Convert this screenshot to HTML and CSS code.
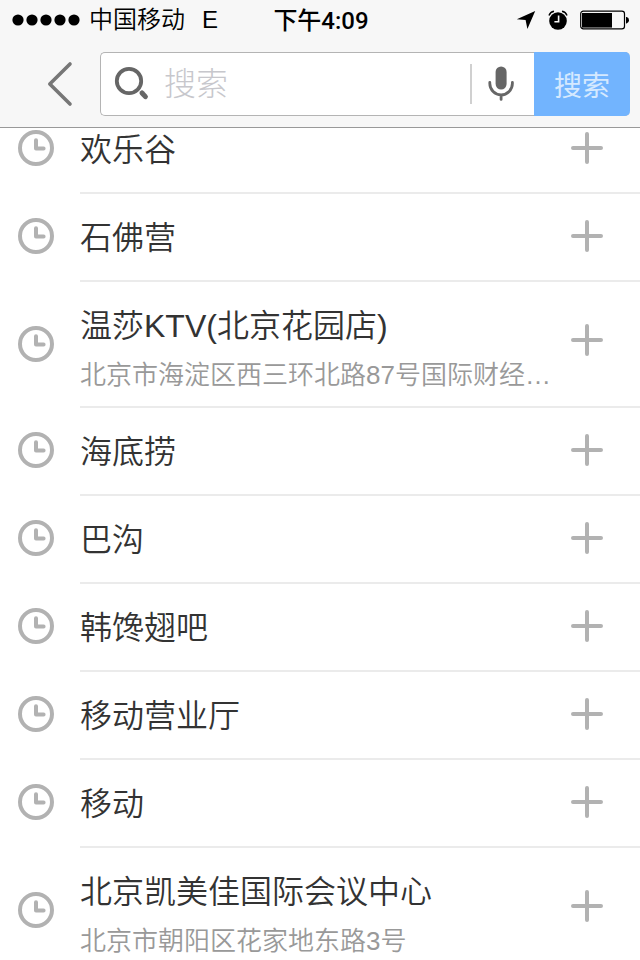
FILE: index.html
```html
<!DOCTYPE html>
<html lang="zh-CN">
<head>
  <meta charset="UTF-8">
  <meta name="viewport" content="width=device-width, initial-scale=1.0">
  <title>搜索</title>
  <link rel="stylesheet" href="styles.css">
</head>
<body>
<!-- shared icons -->
<svg class="sprite" aria-hidden="true">
  <symbol id="clock" viewBox="0 0 36 36">
    <circle cx="18" cy="18" r="16" fill="none" stroke="currentColor" stroke-width="4"/>
    <path d="M18 10.3V18.4H25.6" fill="none" stroke="currentColor" stroke-width="4" stroke-linecap="round" stroke-linejoin="round"/>
  </symbol>
  <symbol id="plus" viewBox="0 0 32 32">
    <path d="M16 2V30M2 16H30" fill="none" stroke="currentColor" stroke-width="4" stroke-linecap="round"/>
  </symbol>
</svg>

<header>
  <div class="status-bar">
    <div class="carrier">
      <svg class="signal" width="68" height="12" viewBox="0 0 68 12">
        <circle cx="6" cy="6" r="5.6"/>
        <circle cx="20" cy="6" r="5.6"/>
        <circle cx="34" cy="6" r="5.6"/>
        <circle cx="48" cy="6" r="5.6"/>
        <circle cx="62" cy="6" r="5.6"/>
      </svg>
      <span>中国移动</span>
      <span class="network">E</span>
    </div>
    <time class="time">下午4:09</time>
    <div class="indicators">
      <svg width="20" height="20" viewBox="0 0 20 20">
        <path d="M19.2 1L0.8 9.2L9.6 10L11.4 19Z"/>
      </svg>
      <svg width="20" height="20" viewBox="0 0 20 20">
        <circle cx="10" cy="11" r="8.8"/>
        <path d="M1 5.4Q2.2 2 6 1.2M19 5.4Q17.8 2 14 1.2" fill="none" stroke="#000" stroke-width="1.4"/>
        <path d="M10.6 5.6V11.8H6.4" fill="none" stroke="#f7f7f7" stroke-width="1.6"/>
      </svg>
      <svg width="50" height="20" viewBox="0 0 50 20">
        <rect x="0.7" y="1.2" width="43.8" height="17.6" rx="2.6" fill="none" stroke="#000" stroke-width="1.2"/>
        <rect x="2" y="3" width="30" height="14.6"/>
        <path d="M46 7H46.6Q49 7.4 49 10.2T46.6 13.4H46Z"/>
      </svg>
    </div>
  </div>

  <div class="nav-bar">
    <button class="back" type="button" aria-label="返回">
      <svg width="26" height="46" viewBox="0 0 26 46">
        <path d="M23 3L2.8 23L23 43" fill="none" stroke="#777" stroke-width="3.6" stroke-linecap="round" stroke-linejoin="round"/>
      </svg>
    </button>
    <form class="search">
      <label class="search-icon" for="keyword" aria-label="搜索">
        <svg width="36" height="36" viewBox="0 0 36 36">
          <circle cx="15" cy="15" r="12.2" fill="none" stroke="#666" stroke-width="3.8"/>
          <path d="M28 27L31.4 30.6" stroke="#666" stroke-width="5" stroke-linecap="round"/>
        </svg>
      </label>
      <input id="keyword" type="text" placeholder="搜索">
      <button class="voice" type="button" aria-label="语音">
        <svg width="26" height="36" viewBox="0 0 26 36">
          <rect x="7.6" y="0.5" width="11" height="23" rx="5.5" fill="#666"/>
          <path d="M1.8 16.4V17.6A11.3 11.3 0 0 0 24.4 17.6V16.4M13.1 29V33.4" fill="none" stroke="#666" stroke-width="2.8" stroke-linecap="round"/>
        </svg>
      </button>
      <button class="submit" type="submit">搜索</button>
    </form>
  </div>
</header>

<ul class="history">
  <li>
    <svg class="clock"><use href="#clock"/></svg>
    <div class="place"><h2>欢乐谷</h2></div>
    <button class="add" type="button" aria-label="添加"><svg><use href="#plus"/></svg></button>
  </li>
  <li>
    <svg class="clock"><use href="#clock"/></svg>
    <div class="place"><h2>石佛营</h2></div>
    <button class="add" type="button" aria-label="添加"><svg><use href="#plus"/></svg></button>
  </li>
  <li class="detailed">
    <svg class="clock"><use href="#clock"/></svg>
    <div class="place">
      <h2>温莎KTV(北京花园店)</h2>
      <p>北京市海淀区西三环北路87号国际财经…</p>
    </div>
    <button class="add" type="button" aria-label="添加"><svg><use href="#plus"/></svg></button>
  </li>
  <li>
    <svg class="clock"><use href="#clock"/></svg>
    <div class="place"><h2>海底捞</h2></div>
    <button class="add" type="button" aria-label="添加"><svg><use href="#plus"/></svg></button>
  </li>
  <li>
    <svg class="clock"><use href="#clock"/></svg>
    <div class="place"><h2>巴沟</h2></div>
    <button class="add" type="button" aria-label="添加"><svg><use href="#plus"/></svg></button>
  </li>
  <li>
    <svg class="clock"><use href="#clock"/></svg>
    <div class="place"><h2>韩馋翅吧</h2></div>
    <button class="add" type="button" aria-label="添加"><svg><use href="#plus"/></svg></button>
  </li>
  <li>
    <svg class="clock"><use href="#clock"/></svg>
    <div class="place"><h2>移动营业厅</h2></div>
    <button class="add" type="button" aria-label="添加"><svg><use href="#plus"/></svg></button>
  </li>
  <li>
    <svg class="clock"><use href="#clock"/></svg>
    <div class="place"><h2>移动</h2></div>
    <button class="add" type="button" aria-label="添加"><svg><use href="#plus"/></svg></button>
  </li>
  <li class="detailed">
    <svg class="clock"><use href="#clock"/></svg>
    <div class="place">
      <h2>北京凯美佳国际会议中心</h2>
      <p>北京市朝阳区花家地东路3号</p>
    </div>
    <button class="add" type="button" aria-label="添加"><svg><use href="#plus"/></svg></button>
  </li>
</ul>
</body>
</html>
```
FILE: styles.css
```css
* {
    box-sizing: border-box;
}

body {
    display: flex;
    flex-direction: column;
    height: 100vh;
    margin: 0;
    overflow: hidden;
    font-family: "Liberation Sans", "Noto Sans CJK SC", sans-serif;
    font-weight: 350;
    background-color: #fff;
    color: #333;
}

svg {
    display: block;
    flex: none;
}

button {
    display: flex;
    align-items: center;
    justify-content: center;
    padding: 0;
    border: 0;
    background: none;
    font: inherit;
    cursor: pointer;
}

.sprite {
    position: absolute;
    width: 0;
    height: 0;
}

header {
    flex: none;
    z-index: 1;
    background-color: #f7f7f7;
    border-bottom: 1px solid #999;
}

/* status bar */
.status-bar {
    display: grid;
    grid-template-columns: 1fr auto 1fr;
    align-items: center;
    height: 40px;
    padding: 0 10px 0 12px;
    font-size: 24px;
    line-height: 42px;
    color: #000;
}

.carrier {
    display: flex;
    align-items: center;
    gap: 9px;
    height: 40px;
}

.network {
    margin-left: 8px;
}

.time {
    height: 40px;
    font-family: Roboto, "Noto Sans CJK SC", sans-serif;
    font-weight: 500;
}

.indicators {
    display: flex;
    justify-content: flex-end;
    gap: 12px;
}

/* search bar */
.nav-bar {
    display: flex;
    padding: 12px 10px 11px 0;
}

.back {
    width: 100px;
    padding-left: 20px;
}

.search {
    display: flex;
    flex: 1;
    min-width: 0;
    height: 64px;
    border: 1px solid #b4b4b4;
    border-right: 0;
    border-radius: 5px;
    background-color: #fff;
}

.search-icon {
    display: flex;
    align-items: center;
    padding: 0 14px 0 13px;
}

.search input {
    flex: 1;
    min-width: 0;
    padding: 0;
    border: 0;
    outline: 0;
    background: none;
    font: inherit;
    font-size: 32px;
    color: #333;
}

.search input::placeholder {
    font-weight: 300;
    color: #c7c7cc;
    opacity: 1;
}

.voice {
    width: 64px;
    height: 40px;
    margin: 11px 0;
    padding-right: 4px;
    border-left: 2px solid #d0d0d0;
}

.submit {
    width: 96px;
    margin: -1px 0;
    border-radius: 0 5px 5px 0;
    background-color: #72b4fe;
    font-size: 28px;
    font-weight: 400;
    color: #d5e9ff;
}

/* the list is scrolled a little way under the header */
.history {
    flex: none;
    margin: -22px 0 0;
    padding: 0;
    list-style: none;
}

.history li {
    display: flex;
    align-items: center;
    padding: 0 0 2px 18px;
}

.clock {
    width: 36px;
    height: 36px;
    margin: 0 26px 2px 0;
    color: #b2b2b2;
}

.place {
    flex: 1;
    min-width: 0;
    height: 88px;
    margin-bottom: -2px;
    padding-top: 20px;
    border-bottom: 2px solid #ebebeb;
}

.place h2,
.place p {
    margin: 0;
    overflow: hidden;
    font-weight: 350;
    white-space: nowrap;
    text-overflow: ellipsis;
}

.place h2 {
    font-size: 32px;
    line-height: 48px;
}

.place p {
    font-size: 26px;
    line-height: 50px;
    color: #999;
}

.add {
    align-self: stretch;
    width: 86px;
    margin-bottom: -2px;
    padding: 0 20px 2px 0;
    border-bottom: 2px solid #ebebeb;
    color: #b2b2b2;
}

.add svg {
    width: 32px;
    height: 32px;
}

.detailed .clock {
    margin-bottom: 0;
}

.detailed .place {
    height: 126px;
}

.detailed .add {
    padding-bottom: 8px;
}
```
